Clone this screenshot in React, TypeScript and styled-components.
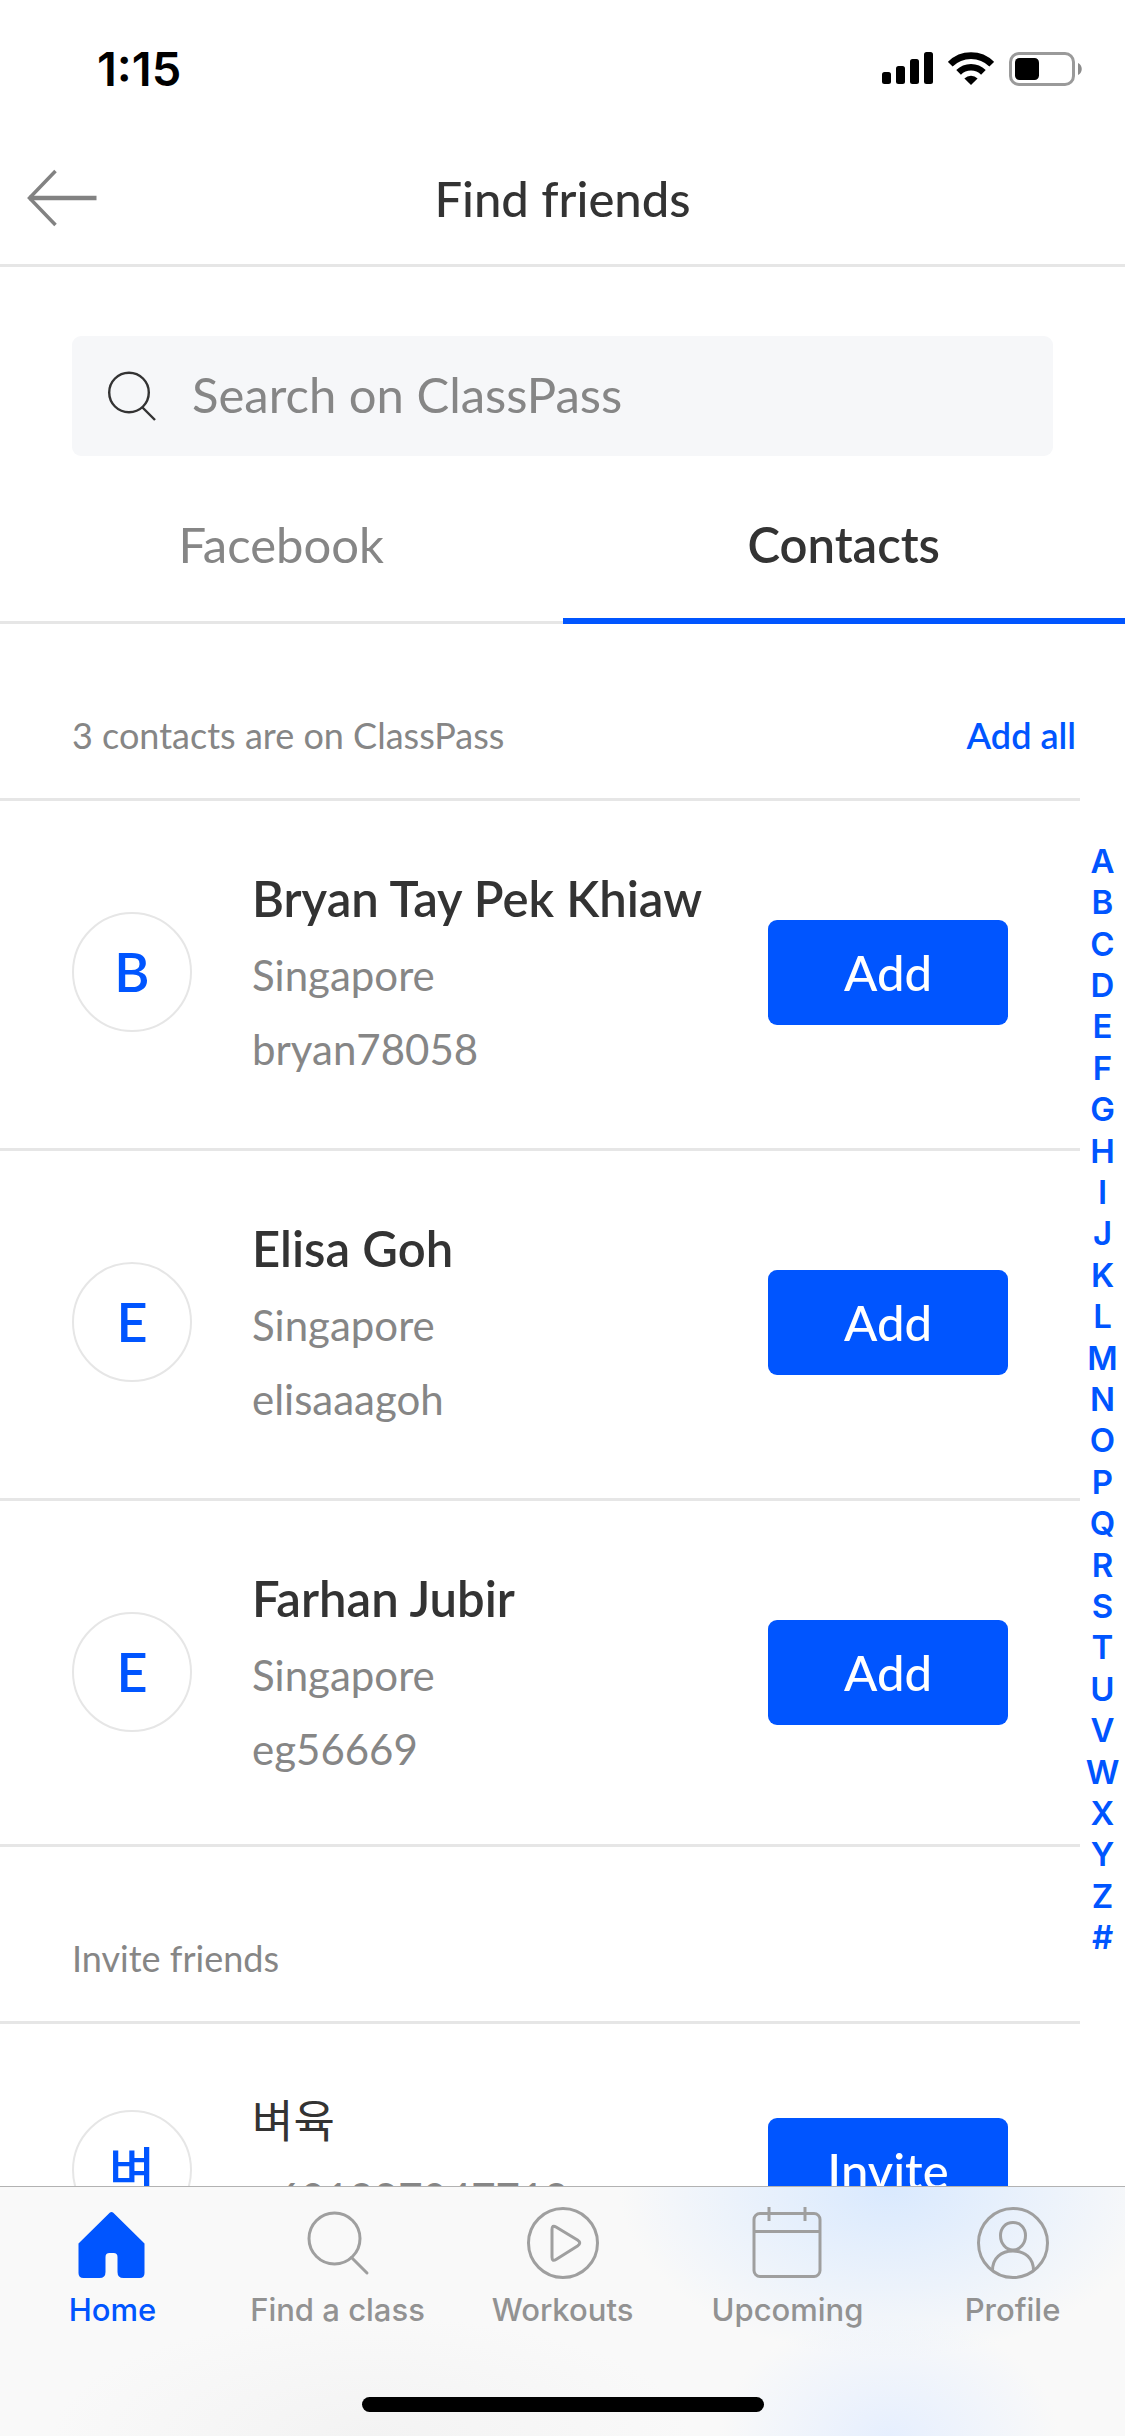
import React from "react";
import styled, { createGlobalStyle } from "styled-components";

const BLUE = "#0055ff";
const INK = "#333333";
const GREY = "#868686";
const ICON_GREY = "#9f9f9f";
const LINE = "#e6e6e6";
const BRAND_FONT = `Lato, "Noto Sans CJK KR", sans-serif`;
const SYSTEM_FONT = `Inter, "Noto Sans CJK KR", sans-serif`;

const GlobalStyle = createGlobalStyle`
  *, *::before, *::after { box-sizing: border-box; }
  body { margin: 0; background: #fff; }
  button, input { font: inherit; color: inherit; }
  button { border: 0; padding: 0; background: none; cursor: pointer; }
  ul { list-style: none; margin: 0; padding: 0; }
  svg { display: block; flex: none; }
`;

const Screen = styled.div`
  display: flex;
  flex-direction: column;
  height: 100vh;
  overflow: hidden;
  background: #fff;
  color: ${INK};
  font-family: ${BRAND_FONT};
`;

const StatusBar = styled.div`
  display: flex;
  flex: none;
  align-items: center;
  justify-content: space-between;
  height: 132px;
  padding: 6px 43px 0 97px;
  color: #000;
`;

const Clock = styled.time`
  font: 600 47px/54px ${SYSTEM_FONT};
`;

const StatusIcons = styled.div`
  display: flex;
  align-items: center;
  gap: 15px;
`;

const NavBar = styled.header`
  display: grid;
  flex: none;
  grid-template-columns: 120px 1fr 120px;
  align-items: center;
  height: 135px;
  border-bottom: 3px solid ${LINE};
`;

const BackButton = styled.button`
  display: flex;
  align-items: center;
  height: 100%;
  padding-left: 26px;
`;

const Title = styled.h1`
  margin: 0;
  font-size: 49px;
  line-height: 60px;
  font-weight: 500;
  text-align: center;
`;

const SearchBox = styled.label`
  display: flex;
  flex: none;
  align-items: center;
  gap: 36px;
  height: 120px;
  margin: 69px 72px 0;
  padding: 0 36px;
  border-radius: 9px;
  background: #f6f7f9;
`;

const SearchInput = styled.input`
  flex: 1;
  min-width: 0;
  border: 0;
  padding: 0 0 4px;
  outline: 0;
  background: transparent;
  font-size: 49px;
  font-weight: 400;
  line-height: 60px;

  &::placeholder {
    color: ${GREY};
    opacity: 1;
  }
`;

const Tabs = styled.div`
  display: grid;
  flex: none;
  grid-template-columns: 1fr 1fr;
  height: 168px;
`;

const Tab = styled.button<{ $active?: boolean }>`
  padding-top: 8px;
  font-size: 49px;
  line-height: 60px;
  font-weight: ${(p) => (p.$active ? 600 : 400)};
  color: ${(p) => (p.$active ? INK : GREY)};
  box-shadow: ${(p) => (p.$active ? `inset 0 -6px ${BLUE}` : `inset 0 -3px ${LINE}`)};
`;

const Body = styled.div`
  display: grid;
  flex: 1;
  grid-template-columns: 1fr 45px;
  min-height: 0;
  overflow: hidden;
`;

const Lists = styled.main`
  min-width: 0;
`;

const SectionHeader = styled.div`
  display: flex;
  align-items: center;
  justify-content: space-between;
  height: 177px;
  padding: 48px 4px 0 72px;
  border-bottom: 3px solid ${LINE};
  font-size: 36px;
  line-height: 48px;
`;

const SectionTitle = styled.h2`
  margin: 0;
  font: inherit;
  font-weight: 400;
  color: ${GREY};
`;

const AddAll = styled.button`
  font-weight: 600;
  color: ${BLUE};
`;

const Row = styled.li`
  display: grid;
  grid-template-columns: 120px 1fr 240px;
  column-gap: 60px;
  align-items: center;
  padding: 57px 72px 62px;
  border-bottom: 3px solid ${LINE};

  &:last-child {
    padding-bottom: 58px;
  }
`;

const Avatar = styled.div`
  display: grid;
  place-items: center;
  height: 120px;
  border: 2px solid ${LINE};
  border-radius: 50%;
  color: ${BLUE};
  font-size: 54px;
  line-height: 60px;
  font-weight: 600;

  &:lang(ko) {
    font-size: 50px;
    font-weight: 500;
  }
`;

const Details = styled.div<{ $short?: boolean }>`
  min-width: 0;
  padding-bottom: ${(p) => (p.$short ? 24 : 0)}px;
  white-space: nowrap;
`;

const Name = styled.h3`
  margin: 0;
  font-size: 49px;
  line-height: 80px;
  font-weight: 600;

  &:lang(ko) {
    font-size: 45px;
    font-weight: 400;
  }
`;

const Detail = styled.p`
  margin: 0;
  font-size: 42px;
  line-height: 74px;
  font-weight: 400;
  color: ${GREY};
`;

const ActionButton = styled.button`
  height: 105px;
  border-radius: 9px;
  background: ${BLUE};
  color: #fff;
  font-size: 49px;
  line-height: 60px;
  font-weight: 500;
`;

const LetterIndex = styled.ul`
  display: grid;
  grid-auto-rows: 1fr;
  height: 1118px;
  margin-top: 216px;
`;

const LetterLink = styled.a`
  display: grid;
  place-items: center;
  height: 100%;
  color: ${BLUE};
  font: 600 33px/40px ${SYSTEM_FONT};
  text-decoration: none;
`;

const TabBar = styled.footer`
  display: flex;
  flex: none;
  flex-direction: column;
  align-items: center;
  justify-content: space-between;
  height: 250px;
  padding-bottom: 24px;
  border-top: 1px solid #b2b2b2;
  background:
    radial-gradient(ellipse 270px 170px at 79% 0, #d9e9fe, #d9e9fe00),
    radial-gradient(ellipse 170px 120px at 79% 100%, #e6effe, #e6effe00),
    radial-gradient(ellipse 320px 120px at 33% 100%, #f3f3f3, #f3f3f300),
    #f9f9f9;
`;

const TabBarNav = styled.nav`
  display: grid;
  grid-template-columns: repeat(5, 1fr);
  width: 100%;
  padding-top: 20px;
`;

const TabBarLink = styled.a<{ $active?: boolean }>`
  display: flex;
  flex-direction: column;
  align-items: center;
  gap: 13px;
  color: ${(p) => (p.$active ? BLUE : "#929292")};
  font: 500 31px/36px ${SYSTEM_FONT};
  text-decoration: none;
  white-space: nowrap;
`;

const HomeIndicator = styled.div`
  width: 402px;
  height: 15px;
  border-radius: 8px;
  background: #000;
`;

const SignalIcon = () => (
  <svg width="51" height="34" viewBox="0 0 51 34" fill="currentColor" aria-hidden="true">
    <rect x="0" y="20" width="9" height="12" rx="2.5" />
    <rect x="14" y="14" width="9" height="18" rx="2.5" />
    <rect x="28" y="7" width="9" height="25" rx="2.5" />
    <rect x="42" y="0" width="9" height="32" rx="2.5" />
  </svg>
);

const WifiIcon = () => (
  <svg width="46" height="34" viewBox="0 0 46 34" aria-hidden="true">
    <g fill="none" stroke="currentColor" strokeWidth="6.6">
      <path d="M2.3 12.2a29.3 29.3 0 0 1 41.4 0" />
      <path d="M10.6 20.4a17.6 17.6 0 0 1 24.8 0" />
    </g>
    <path d="M23 33l-6.6-6.6a9.4 9.4 0 0 1 13.2 0z" fill="currentColor" />
  </svg>
);

const BatteryIcon = () => (
  <svg width="73" height="34" viewBox="0 0 73 34" aria-hidden="true">
    <rect x="1.5" y="1.5" width="63" height="31" rx="8.5" fill="none" stroke="#9a9a9a" strokeWidth="3" />
    <rect x="6" y="6" width="24" height="22" rx="4.5" fill="currentColor" />
    <path d="M69 11c5 2 5 10 0 12z" fill="#8c8c8c" />
  </svg>
);

const BackIcon = () => (
  <svg width="72" height="58" viewBox="0 0 72 58" fill="none" stroke="#828282" aria-hidden="true">
    <path d="M3 29h67.5" strokeWidth="4.500" />
    <path d="M29.5 2L3.5 29l26 27" strokeWidth="3.500" />
  </svg>
);

const SearchIcon = () => (
  <svg width="48" height="50" viewBox="0 0 48 50" fill="none" stroke={INK} strokeWidth="2.4" aria-hidden="true">
    <circle cx="21" cy="21.5" r="19.8" />
    <path d="M34.5 36.5L47 49" />
  </svg>
);

const TabIcon = ({ children }: { children: React.ReactNode }) => (
  <svg width="74" height="72" viewBox="0 0 74 72" fill="none" stroke={ICON_GREY} strokeWidth="3" aria-hidden="true">
    {children}
  </svg>
);

const HomeIcon = () => (
  <TabIcon>
    <path
      d="M33.7 5.7q1.8-1.4 3.600 0L68.500 36.500V66q0 5-5 5H47.500q-6 0-6-6V50q0-4-4-4h-4q-4 0-4 4v15q0 6-6 6H7.500q-5 0-5-5V36.500z"
      fill={BLUE}
      stroke="none"
    />
  </TabIcon>
);

const FindIcon = () => (
  <TabIcon>
    <circle cx="33.5" cy="31.5" r="25.5" />
    <path d="M50.5 50.500L66 66" strokeLinecap="round" />
  </TabIcon>
);

const WorkoutsIcon = () => (
  <TabIcon>
    <circle cx="37" cy="36" r="34.5" />
    <path d="M26 22.500q0-5 4-2.500L51.500 33q4.500 3 0 6L30 52.500q-4 2.500-4-2.500z" strokeLinejoin="round" />
  </TabIcon>
);

const UpcomingIcon = () => (
  <TabIcon>
    <rect x="3" y="6.500" width="66" height="63" rx="6" />
    <path d="M3 24.500h66M18 0v14M54 0v14" />
  </TabIcon>
);

const ProfileIcon = () => (
  <TabIcon>
    <circle cx="37" cy="36" r="34.5" />
    <path d="M37 15.500c7.500 0 12.500 5.500 12.500 13 0 8-5.500 14.500-12.500 14.500s-12.500-6.500-12.500-14.500c0-7.500 5-13 12.500-13z" />
    <path d="M16.500 63.500C16.500 51 25 44 37 44s20.500 7 20.500 19.500" />
  </TabIcon>
);

interface Person {
  initial: string;
  name: string;
  details: string[];
  lang?: string;
}

const onClassPass: Person[] = [
  { initial: "B", name: "Bryan Tay Pek Khiaw", details: ["Singapore", "bryan78058"] },
  { initial: "E", name: "Elisa Goh", details: ["Singapore", "elisaaagoh"] },
  { initial: "E", name: "Farhan Jubir", details: ["Singapore", "eg56669"] },
];

const invitees: Person[] = [{ initial: "벼", name: "벼육", details: ["+601987047719"], lang: "ko" }];

const tabBarItems = [
  { label: "Home", Icon: HomeIcon },
  { label: "Find a class", Icon: FindIcon },
  { label: "Workouts", Icon: WorkoutsIcon },
  { label: "Upcoming", Icon: UpcomingIcon },
  { label: "Profile", Icon: ProfileIcon },
];

const PersonRow = ({ person, action }: { person: Person; action: string }) => (
  <Row>
    <Avatar lang={person.lang}>{person.initial}</Avatar>
    <Details $short={person.details.length === 1}>
      <Name lang={person.lang}>{person.name}</Name>
      {person.details.map((line) => (
        <Detail key={line}>{line}</Detail>
      ))}
    </Details>
    <ActionButton type="button">{action}</ActionButton>
  </Row>
);

export default function App() {
  return (
    <>
      <GlobalStyle />
      <Screen>
        <StatusBar>
          <Clock>1:15</Clock>
          <StatusIcons>
            <SignalIcon />
            <WifiIcon />
            <BatteryIcon />
          </StatusIcons>
        </StatusBar>
        <NavBar>
          <BackButton type="button" aria-label="Back">
            <BackIcon />
          </BackButton>
          <Title>Find friends</Title>
        </NavBar>
        <SearchBox>
          <SearchIcon />
          <SearchInput type="text" placeholder="Search on ClassPass" aria-label="Search on ClassPass" />
        </SearchBox>
        <Tabs role="tablist">
          <Tab type="button" role="tab" aria-selected={false}>
            Facebook
          </Tab>
          <Tab type="button" role="tab" aria-selected $active>
            Contacts
          </Tab>
        </Tabs>
        <Body>
          <Lists>
            <SectionHeader>
              <SectionTitle>3 contacts are on ClassPass</SectionTitle>
              <AddAll type="button">Add all</AddAll>
            </SectionHeader>
            <ul>
              {onClassPass.map((person) => (
                <PersonRow key={person.name} person={person} action="Add" />
              ))}
            </ul>
            <SectionHeader>
              <SectionTitle>Invite friends</SectionTitle>
            </SectionHeader>
            <ul>
              {invitees.map((person) => (
                <PersonRow key={person.name} person={person} action="Invite" />
              ))}
            </ul>
          </Lists>
          <LetterIndex>
            {[..."ABCDEFGHIJKLMNOPQRSTUVWXYZ#"].map((letter) => (
              <li key={letter}>
                <LetterLink href={`#${letter}`}>{letter}</LetterLink>
              </li>
            ))}
          </LetterIndex>
        </Body>
        <TabBar>
          <TabBarNav>
            {tabBarItems.map(({ label, Icon }, i) => (
              <TabBarLink key={label} href="#" $active={i === 0}>
                <Icon />
                {label}
              </TabBarLink>
            ))}
          </TabBarNav>
          <HomeIndicator />
        </TabBar>
      </Screen>
    </>
  );
}
